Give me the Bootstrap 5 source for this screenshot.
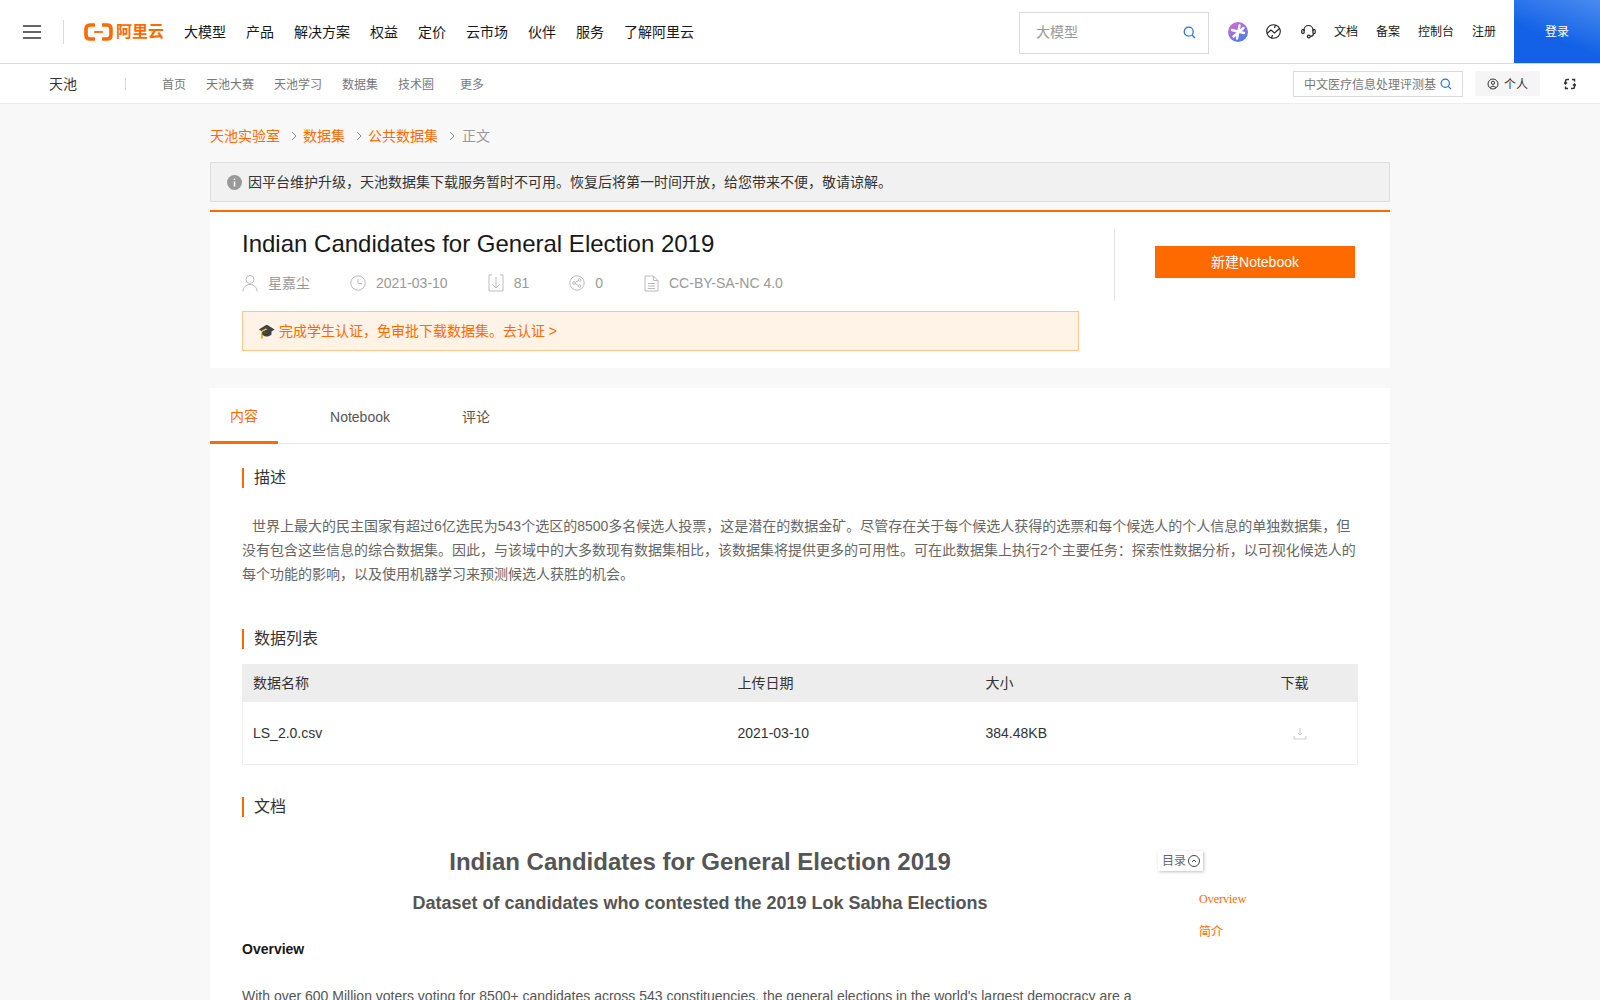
<!DOCTYPE html>
<html lang="zh-CN">

<head>
    <meta charset="UTF-8">
    <meta name="viewport" content="width=device-width, initial-scale=1.0">
    <title>Indian Candidates for General Election 2019 - 天池</title>
    <link href="https://cdn.jsdelivr.net/npm/bootstrap@5.3.0/dist/css/bootstrap.min.css" rel="stylesheet">
    <style>
        html, body { height: 1000px; overflow: hidden; }
        body {
            background: #f8f8f8;
            font-family: "Liberation Sans", "Noto Sans CJK SC", sans-serif;
            font-size: 14px;
            color: #333;
        }
        a { text-decoration: none; }

        /* top bar */
        .top-bar { height: 64px; background: #fff; border-bottom: 1px solid #d9d9d9; }
        .burger { width: 18px; height: 14px; margin-left: 23px; border-top: 2px solid #666; border-bottom: 2px solid #666; position: relative; }
        .burger::after { content: ""; position: absolute; left: 0; right: 0; top: 4px; height: 2px; background: #666; }
        .top-sep { width: 1px; height: 24px; background: #d9d9d9; margin: 0 20px 0 22px; }
        .logo-box { width: 80px; margin-right: 20px; gap: 3px; }
        .logo-text { color: #ff6a00; font-size: 16px; font-weight: 700; line-height: 1; white-space: nowrap; }
        .top-links { gap: 20px; padding-top: 2px; }
        .top-links a { color: #181818; font-size: 14px; }
        .top-search { width: 190px; height: 42px; margin-top: 2px; border: 1px solid #d9d9d9; margin-right: 19px; padding: 0 12px 0 16px; color: #999; }
        .top-tools { margin-right: 18px; }
        .top-tools svg { margin-right: 18px; }
        .top-tools svg.tool-globe { margin-right: 20px; }
        .top-tools svg.tool-star { margin-right: 18px; }
        .top-tools a { color: #181818; font-size: 12px; margin-right: 18px; padding-top: 1px; }
        .top-tools a:last-child { margin-right: 0; }
        .login-btn { width: 86px; height: 63px; background: linear-gradient(200deg, #4a8bf0, #1261e6 60%); color: #fff; font-size: 12px; }

        /* sub bar */
        .sub-bar { height: 40px; background: #fff; border-bottom: 1px solid #eee; }
        .sub-title { width: 76px; margin-left: 49px; font-size: 14px; color: #333; padding-top: 2px; }
        .sub-sep { width: 1px; height: 12px; background: #d9d9d9; margin-right: 36px; }
        .sub-links { padding-top: 2px; }
        .sub-links a { color: #777; font-size: 12px; margin-right: 20px; }
        .sub-links a:nth-child(5) { margin-right: 26px; }
        .sub-search { width: 170px; height: 26px; border: 1px solid #d9d9d9; padding: 0 10px; font-size: 12px; color: #777; margin-right: 12px; white-space: nowrap; overflow: hidden; }
        .sub-search span, .personal-btn span { padding-top: 2px; }
        .personal-btn { width: 65px; height: 25px; background: #f5f5f5; font-size: 12px; color: #333; margin-right: 24px; gap: 5px; }

        /* page */
        .page-wrap { width: 1180px; margin: 0 auto; }
        .crumbs { height: 58px; padding-top: 6px; color: #999; }
        .crumbs a { color: #ff6a00; }
        .crumbs svg { margin: 0 6px 0 11px; }
        .crumbs svg:last-of-type { margin-right: 7px; }
        .notice-gray { height: 40px; background: #f1f1f1; border: 1px solid #ddd; padding-left: 16px; color: #333; gap: 6px; }
        .info-head { margin-top: 8px; background: #fff; border-top: 2px solid #ff6a00; height: 158px; padding: 17px 0 0 32px; }
        .head-main { width: 837px; }
        .ds-title { font-size: 24px; font-weight: 400; color: #181818; line-height: 30px; margin: 0; }
        .meta-row { height: 28px; margin-top: 10px; color: #999; }
        .meta-item { margin-right: 40px; gap: 10px; }
        .meta-item:nth-child(4) { margin-right: 41px; }
        .cert-bar { margin-top: 14px; height: 40px; background: #fff2e6; border: 1px solid #ffc58a; color: #ff6a00; padding-left: 15px; }
        .head-side { width: 1px; height: 72px; background: #e5e5e5; margin-left: 35px; }
        .new-btn { width: 200px; height: 32px; margin: 17px 0 0 40px; background: #ff6a00; color: #fff; font-size: 14px; }

        .body-card { margin-top: 20px; background: #fff; height: 700px; }
        .tab-row { height: 56px; border-bottom: 1px solid #e8e8e8; }
        .tab-item { height: 56px; color: #555; }
        .tab-on { width: 68px; color: #ff6a00; border-bottom: 3px solid #ff6a00; padding-top: 3px; }
        .tab-two { margin-left: 52px; width: 60px; padding-top: 2px; }
        .tab-three { margin-left: 72px; padding-top: 2px; }
        .body-inner { padding: 0 32px; }
        .sec-title { border-left: 2px solid #ff6a00; padding-left: 10px; font-size: 16px; line-height: 20px; color: #333; }
        .sec-desc { margin-top: 24px; }
        .sec-list { margin-top: 43px; }
        .sec-doc { margin-top: 32px; }
        .desc-text { color: #666; line-height: 24px; margin: 26px 0 0; text-indent: 10px; }
        .file-table { margin: 15px 0 0; border: 1px solid #eee; }
        .file-table th, .file-table td { padding: 0 10px; font-weight: 400; vertical-align: middle; border: 0; color: #333; }
        .file-table th { background: #ededed; height: 37px; }
        .file-table td { height: 63px; padding-top: 2px; }
        .dl-icon { margin: 0 0 2px 12px; }
        .doc-wrap { margin-top: 27px; }
        .doc-main { width: 916px; }
        .doc-h1 { font-size: 24px; font-weight: 700; color: #555; text-align: center; margin: 0; line-height: 36px; }
        .doc-h2 { font-size: 18px; font-weight: 700; color: #555; text-align: center; margin: 9px 0 0; line-height: 28px; }
        .doc-h3 { font-size: 14px; font-weight: 700; color: #181818; margin: 22px 0 0; line-height: 20px; }
        .doc-p { color: #555; margin: 26px 0 0; line-height: 22px; white-space: nowrap; }
        .toc-box { margin-left: 0; }
        .toc-btn { width: 45px; height: 20px; font-size: 12px; color: #666; gap: 2px; padding-left: 4px; box-shadow: 1px 1px 3px rgba(0, 0, 0, .25); margin-top: 7px; }
        .toc-list { margin: 12px 0 0 41px; font-family: "Liberation Serif", "Noto Sans CJK SC", serif; font-size: 12px; }
        .toc-list a { display: block; color: #ff6a00; line-height: 32px; }
        .toc-list a + a { margin-top: 1px; }
    </style>
</head>

<body>

    <header class="top-bar d-flex align-items-center">
        <div class="burger"></div>
        <div class="top-sep"></div>
        <div class="logo-box d-flex align-items-center">
            <svg width="29" height="18" viewBox="0 0 29 18" fill="none" stroke="#ff6a00" stroke-width="3.600">
                <path d="M11 2H6Q2 2 2 6V12Q2 16 6 16H11M18 2H23Q27 2 27 6V12Q27 16 23 16H18"/>
                <path d="M10 9H19" stroke-width="1.800"/>
            </svg>
            <span class="logo-text">阿里云</span>
        </div>
        <nav class="top-links d-flex">
            <a href="#">大模型</a><a href="#">产品</a><a href="#">解决方案</a><a href="#">权益</a><a href="#">定价</a><a href="#">云市场</a><a href="#">伙伴</a><a href="#">服务</a><a href="#">了解阿里云</a>
        </nav>
        <div class="top-search d-flex align-items-center justify-content-between ms-auto">
            <span>大模型</span>
            <svg width="13" height="13" viewBox="0 0 13 13" fill="none" stroke="#1f6fe5" stroke-width="1.200"><circle cx="5.700" cy="5.700" r="4.500"/><path d="M9 9l3 3"/></svg>
        </div>
        <div class="top-tools d-flex align-items-center">
            <svg class="tool-star" width="20" height="20" viewBox="0 0 20 20">
                <defs><linearGradient id="star" x1="0.200" y1="0" x2="0.800" y2="1"><stop offset="0" stop-color="#d86ad0"/><stop offset="1" stop-color="#3d7ff0"/></linearGradient></defs>
                <circle cx="10" cy="10" r="10" fill="url(#star)"/>
                <path d="M11.500 3.500L9 16.500M4 8L16 11M5.500 14.500L15.500 6" stroke="#fff" stroke-width="2.400" stroke-linecap="round"/>
            </svg>
            <svg class="tool-globe" width="15" height="15" viewBox="0 0 15 15" fill="none" stroke="#222" stroke-width="1.100"><circle cx="7.500" cy="7.500" r="6.800"/><path d="M1 9.500L5 6L8.500 9L13.500 4.500M9.500 1L8.500 4M5.500 14L6.500 11"/></svg>
            <svg width="15" height="15" viewBox="0 0 15 15" fill="none" stroke="#222" stroke-width="1.200"><path d="M3 7V6a4.500 4.500 0 0 1 9 0v1"/><rect x="0.800" y="5.500" width="2.300" height="4" rx="1"/><rect x="11.900" y="5.500" width="2.300" height="4" rx="1"/><path d="M12.500 9.500q0 2.500-3 3"/><circle cx="7.800" cy="12.500" r="1.400"/></svg>
            <a href="#">文档</a><a href="#">备案</a><a href="#">控制台</a><a href="#">注册</a>
        </div>
        <a href="#" class="login-btn d-flex align-items-center justify-content-center">登录</a>
    </header>

    <div class="sub-bar d-flex align-items-center">
        <div class="sub-title">天池</div>
        <div class="sub-sep"></div>
        <nav class="sub-links d-flex">
            <a href="#">首页</a><a href="#">天池大赛</a><a href="#">天池学习</a><a href="#">数据集</a><a href="#">技术圈</a><a href="#">更多</a>
        </nav>
        <div class="sub-search d-flex align-items-center justify-content-between ms-auto">
            <span>中文医疗信息处理评测基</span>
            <svg width="12" height="12" viewBox="0 0 13 13" fill="none" stroke="#1f6fe5" stroke-width="1.300"><circle cx="5.700" cy="5.700" r="4.500"/><path d="M9 9l3 3"/></svg>
        </div>
        <div class="personal-btn d-flex align-items-center justify-content-center">
            <svg width="12" height="12" viewBox="0 0 12 12" fill="none" stroke="#333"><circle cx="6" cy="6" r="5"/><circle cx="6" cy="4.800" r="1.600"/><path d="M3 9.500q3-3 6 0"/></svg>
            <span>个人</span>
        </div>
        <svg class="me-4" width="12" height="12" viewBox="0 0 12 12" fill="none" stroke="#333" stroke-width="1.500"><path d="M5 1.500H3Q1.500 1.500 1.500 3V6M0 4.500l1.500 1.500L3 4.500M7 10.500H9Q10.500 10.500 10.500 9V6M9 7.500l1.500-1.500L12 7.500M8 1.500h2.500V3.500M4 10.500H1.500V8.500"/></svg>
    </div>

    <main class="page-wrap">
        <div class="crumbs d-flex align-items-center">
            <a href="#">天池实验室</a>
            <svg width="6" height="10" viewBox="0 0 6 10" fill="none" stroke="#888"><path d="M1 1l4 4-4 4"/></svg>
            <a href="#">数据集</a>
            <svg width="6" height="10" viewBox="0 0 6 10" fill="none" stroke="#888"><path d="M1 1l4 4-4 4"/></svg>
            <a href="#">公共数据集</a>
            <svg width="6" height="10" viewBox="0 0 6 10" fill="none" stroke="#888"><path d="M1 1l4 4-4 4"/></svg>
            <span>正文</span>
        </div>

        <div class="notice-gray d-flex align-items-center">
            <svg width="15" height="15" viewBox="0 0 15 15"><circle cx="7.500" cy="7.500" r="7.500" fill="#999"/><path d="M7.500 3.500v1.500M7.500 6.500v5" stroke="#fff" stroke-width="1.500"/></svg>
            <span>因平台维护升级，天池数据集下载服务暂时不可用。恢复后将第一时间开放，给您带来不便，敬请谅解。</span>
        </div>

        <section class="info-head d-flex">
            <div class="head-main">
                <h1 class="ds-title">Indian Candidates for General Election 2019</h1>
                <div class="meta-row d-flex align-items-center">
                    <span class="meta-item d-flex align-items-center">
                        <svg width="16" height="18" viewBox="0 0 16 18" fill="none" stroke="#bbb"><circle cx="8" cy="5.500" r="4"/><path d="M1 17.500c0-4 3-7 7-7s7 3 7 7"/></svg>星嘉尘
                    </span>
                    <span class="meta-item d-flex align-items-center">
                        <svg width="16" height="16" viewBox="0 0 16 16" fill="none" stroke="#bbb"><circle cx="8" cy="8" r="7.200"/><path d="M8 4v4.500h4"/></svg>2021-03-10
                    </span>
                    <span class="meta-item d-flex align-items-center">
                        <svg width="16" height="18" viewBox="0 0 16 18" fill="none" stroke="#bbb"><path d="M4 1H1V17H15V1H12M8 3V14M4.500 10.500L8 14l3.500-3.500"/></svg>81
                    </span>
                    <span class="meta-item d-flex align-items-center">
                        <svg width="16" height="16" viewBox="0 0 16 16" fill="none" stroke="#bbb"><circle cx="8" cy="8" r="7.200"/><circle cx="5" cy="8" r="1.300"/><circle cx="10.500" cy="5" r="1.300"/><circle cx="10.500" cy="11" r="1.300"/><path d="M6 7.500l3.500-2M6 8.500l3.500 2"/></svg>0
                    </span>
                    <span class="meta-item d-flex align-items-center">
                        <svg width="15" height="17" viewBox="0 0 15 17" fill="none" stroke="#bbb"><path d="M1 1H9.500L14 5.500V16H1ZM9.500 1V5.500H14M4 8.500h7M4 11h7M4 13.500h7"/></svg>CC-BY-SA-NC 4.0
                    </span>
                </div>
                <div class="cert-bar d-flex align-items-center">🎓 完成学生认证，免审批下载数据集。去认证 &gt;</div>
            </div>
            <div class="head-side"></div>
            <button type="button" class="new-btn btn rounded-0 border-0 p-0">新建Notebook</button>
        </section>

        <section class="body-card">
            <div class="tab-row d-flex">
                <a href="#" class="tab-item tab-on d-flex align-items-center justify-content-center">内容</a>
                <a href="#" class="tab-item tab-two d-flex align-items-center justify-content-center">Notebook</a>
                <a href="#" class="tab-item tab-three d-flex align-items-center justify-content-center">评论</a>
            </div>
            <div class="body-inner">
                <div class="sec-title sec-desc">描述</div>
                <p class="desc-text">世界上最大的民主国家有超过6亿选民为543个选区的8500多名候选人投票，这是潜在的数据金矿。尽管存在关于每个候选人获得的选票和每个候选人的个人信息的单独数据集，但没有包含这些信息的综合数据集。因此，与该域中的大多数现有数据集相比，该数据集将提供更多的可用性。可在此数据集上执行2个主要任务：探索性数据分析，以可视化候选人的每个功能的影响，以及使用机器学习来预测候选人获胜的机会。</p>
                <div class="sec-title sec-list">数据列表</div>
                <table class="table file-table">
                    <thead>
                        <tr><th style="width:485px">数据名称</th><th style="width:248px">上传日期</th><th style="width:295px">大小</th><th>下载</th></tr>
                    </thead>
                    <tbody>
                        <tr>
                            <td>LS_2.0.csv</td><td>2021-03-10</td><td>384.48KB</td>
                            <td><svg class="dl-icon" width="14" height="12" viewBox="0 0 14 12" fill="none" stroke="#ccc"><path d="M7 0v7M5 5l2 2 2-2M1 8v3h12V8"/></svg></td>
                        </tr>
                    </tbody>
                </table>
                <div class="sec-title sec-doc">文档</div>
                <div class="doc-wrap d-flex">
                    <div class="doc-main">
                        <h2 class="doc-h1">Indian Candidates for General Election 2019</h2>
                        <h3 class="doc-h2">Dataset of candidates who contested the 2019 Lok Sabha Elections</h3>
                        <h4 class="doc-h3">Overview</h4>
                        <p class="doc-p">With over 600 Million voters voting for 8500+ candidates across 543 constituencies, the general elections in the world's largest democracy are a</p>
                    </div>
                    <div class="toc-box">
                        <div class="toc-btn d-flex align-items-center">目录
                            <svg width="12" height="12" viewBox="0 0 12 12" fill="none" stroke="#444"><circle cx="6" cy="6" r="5.500"/><path d="M4 7l2-2 2 2"/></svg>
                        </div>
                        <div class="toc-list"><a href="#">Overview</a><a href="#">简介</a></div>
                    </div>
                </div>
            </div>
        </section>
    </main>

    <script src="https://cdn.jsdelivr.net/npm/bootstrap@5.3.0/dist/js/bootstrap.bundle.min.js"></script>
</body>

</html>
